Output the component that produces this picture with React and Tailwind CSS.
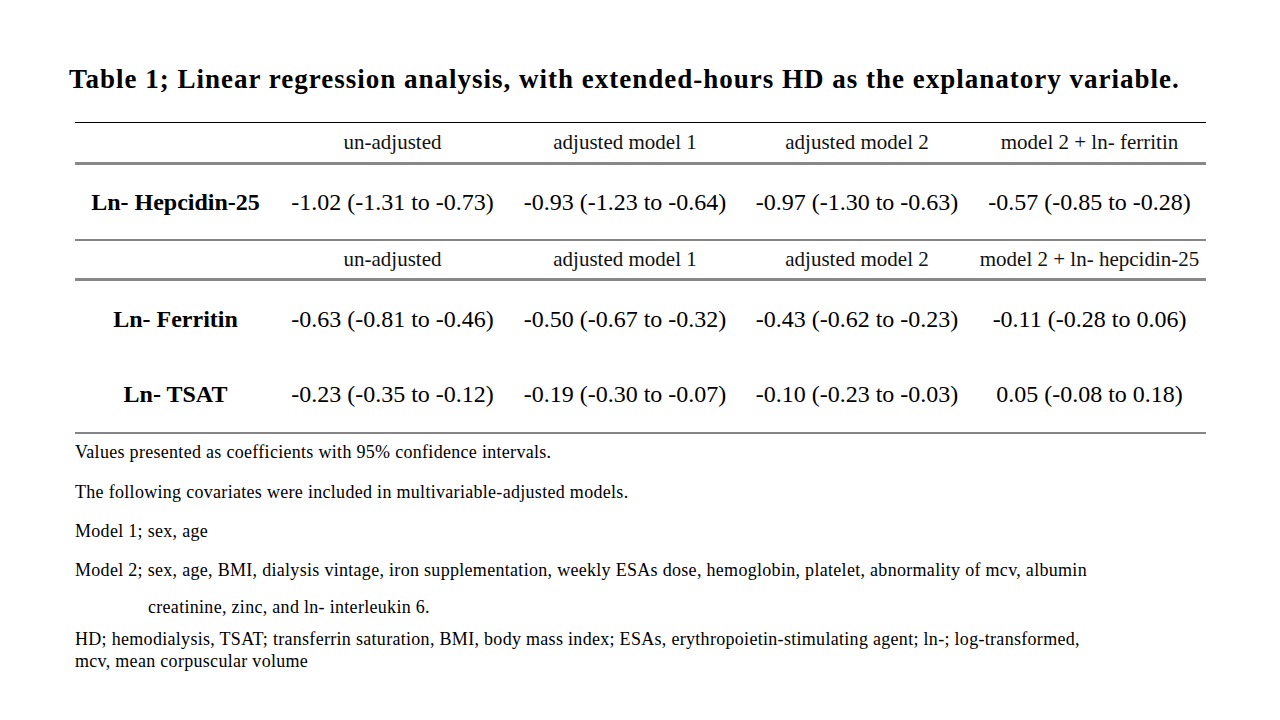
import React from "react";

const serif = { fontFamily: '"Liberation Serif", "Times New Roman", serif' };

function HeaderRow({ last }) {
  return (
    <div className="flex items-center h-full text-[21px] text-[#111]">
      <div className="w-[201px]" />
      <div className="w-[233px] text-center">un-adjusted</div>
      <div className="w-[232px] text-center">adjusted model 1</div>
      <div className="w-[232px] text-center">adjusted model 2</div>
      <div className="w-[233px] text-center whitespace-nowrap">{last}</div>
    </div>
  );
}

function DataRow({ label, vals }) {
  return (
    <div className="flex items-center h-full text-[24px] text-black">
      <div className="w-[201px] text-center font-bold whitespace-nowrap">{label}</div>
      {vals.map((v, i) => (
        <div key={i} className={(i === 0 || i === 3 ? "w-[233px]" : "w-[232px]") + " text-center whitespace-nowrap"}>
          {v}
        </div>
      ))}
    </div>
  );
}

export default function App() {
  return (
    <div className="w-[1280px] h-[720px] bg-white overflow-hidden" style={serif}>
      <div className="pl-[69px] pt-[66px] h-[122px]">
        <div className="text-[27px] tracking-[1px] font-bold leading-none text-black whitespace-nowrap">
          Table 1; Linear regression analysis, with extended-hours HD as the explanatory variable.
        </div>
      </div>
      <div className="ml-[75px] w-[1131px]">
        <div className="border-t border-black h-[40px]">
          <HeaderRow last="model 2 + ln- ferritin" />
        </div>
        <div className="border-t-[3px] border-[#888888] h-[77px]">
          <DataRow label="Ln- Hepcidin-25" vals={["-1.02 (-1.31 to -0.73)", "-0.93 (-1.23 to -0.64)", "-0.97 (-1.30 to -0.63)", "-0.57 (-0.85 to -0.28)"]} />
        </div>
        <div className="border-t-2 border-[#858585] h-[39px]">
          <HeaderRow last="model 2 + ln- hepcidin-25" />
        </div>
        <div className="border-t-[3px] border-[#888888] h-[78px]">
          <DataRow label="Ln- Ferritin" vals={["-0.63 (-0.81 to -0.46)", "-0.50 (-0.67 to -0.32)", "-0.43 (-0.62 to -0.23)", "-0.11 (-0.28 to 0.06)"]} />
        </div>
        <div className="h-[76px] border-b-2 border-[#858585] box-content">
          <DataRow label="Ln- TSAT" vals={["-0.23 (-0.35 to -0.12)", "-0.19 (-0.30 to -0.07)", "-0.10 (-0.23 to -0.03)", "0.05 (-0.08 to 0.18)"]} />
        </div>
        <div className="text-[18px] tracking-[0.3px] leading-[22px] text-black">
          <p className="mt-[7px]">Values presented as coefficients with 95% confidence intervals.</p>
          <p className="mt-[18px]">The following covariates were included in multivariable-adjusted models.</p>
          <p className="mt-[17px]">Model 1; sex, age</p>
          <p className="mt-[17px] whitespace-nowrap">Model 2; sex, age, BMI, dialysis vintage, iron supplementation, weekly ESAs dose, hemoglobin, platelet, abnormality of mcv, albumin</p>
          <p className="mt-[15px] pl-[73px]">creatinine, zinc, and ln- interleukin 6.</p>
          <p className="mt-[10px] whitespace-nowrap">
            HD; hemodialysis, TSAT; transferrin saturation, BMI, body mass index; ESAs, erythropoietin-stimulating agent; ln-; log-transformed,
            <br />
            mcv, mean corpuscular volume
          </p>
        </div>
      </div>
    </div>
  );
}
